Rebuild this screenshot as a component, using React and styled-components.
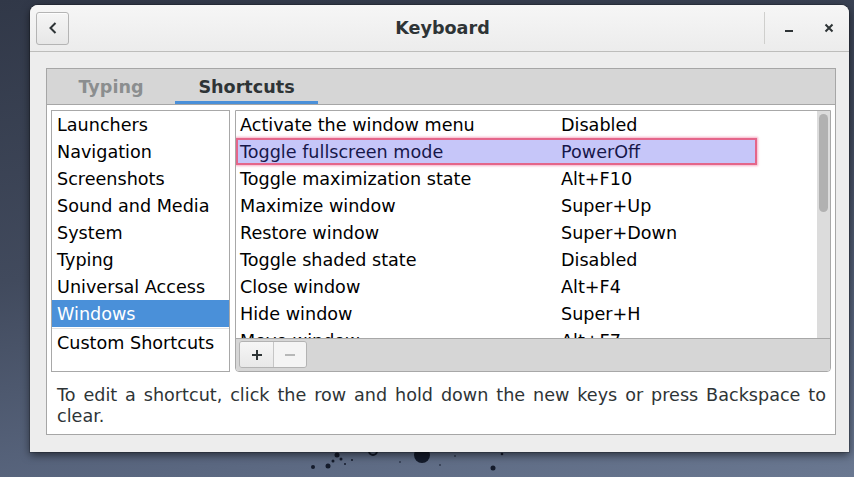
import React from 'react';
import styled, { createGlobalStyle } from 'styled-components';

const Global = createGlobalStyle`
  html, body { margin: 0; padding: 0; }
  body { font-family: "DejaVu Sans", "Noto Sans", sans-serif; }
  * { box-sizing: border-box; }
`;

const FONT = '17.6px';

const Desktop = styled.div`
  position: relative;
  width: 854px;
  height: 477px;
  overflow: hidden;
  padding: 5px 0 0 30px;
  background: linear-gradient(170deg, #313848 0%, #414a5d 45%, #5a6780 80%, #6a7891 100%);
`;

const Splatter = styled.svg`
  position: absolute;
  left: 0;
  bottom: 0;
  width: 854px;
  height: 30px;
`;

const Window = styled.div`
  position: relative;
  z-index: 1;
  width: 819px;
  height: 447px;
  display: flex;
  flex-direction: column;
  background: #ededed;
  border-radius: 8px 8px 0 0;
  box-shadow: 0 3px 9px rgba(0, 0, 0, 0.55), 0 0 0 1px rgba(0, 0, 0, 0.18);
`;

const HeaderBar = styled.div`
  height: 47px;
  flex: none;
  display: grid;
  grid-template-columns: 1fr auto 1fr;
  align-items: center;
  padding: 0 0 0 6px;
  border-bottom: 1px solid #bdbdbb;
  border-radius: 8px 8px 0 0;
  background: linear-gradient(180deg, #f6f6f6 0%, #ececec 100%);
`;

const BackButton = styled.button`
  width: 33px;
  height: 33px;
  padding: 0;
  margin: 0;
  display: flex;
  align-items: center;
  justify-content: center;
  border: 1px solid #b4b4b4;
  border-radius: 3px;
  background: linear-gradient(180deg, #f5f5f5 0%, #e7e7e7 100%);
  box-shadow: inset 0 1px rgba(255, 255, 255, 0.8);
`;

const Title = styled.div`
  font-size: ${FONT};
  font-weight: bold;
  color: #2e3436;
  padding-bottom: 1px;
`;

const Controls = styled.div`
  justify-self: end;
  display: flex;
  align-items: center;
  height: 100%;
`;

const VSep = styled.div`
  width: 1px;
  height: 32px;
  background: #cfcfcd;
  margin-right: 4px;
`;

const CtlButton = styled.div`
  width: 40px;
  height: 32px;
  display: flex;
  align-items: center;
  justify-content: center;
`;

const Body = styled.div`
  flex: 1;
  display: flex;
  padding: 16px 13px 17px 16px;
`;

const Notebook = styled.div`
  flex: 1;
  display: flex;
  flex-direction: column;
  border: 1px solid #a6a6a6;
  background: #ffffff;
`;

const TabBar = styled.div`
  height: 36px;
  flex: none;
  display: flex;
  background: #d6d6d6;
  border-bottom: 1px solid #a6a6a6;
`;

const Tab = styled.div`
  width: ${p => p.$w}px;
  display: flex;
  align-items: center;
  justify-content: center;
  font-size: ${FONT};
  font-weight: bold;
  color: ${p => (p.$active ? '#2e3436' : '#8b8e8f')};
  box-shadow: ${p => (p.$active ? 'inset 0 -3px #4a90d9' : 'none')};
`;

const Page = styled.div`
  flex: 1;
  display: flex;
  flex-direction: column;
  padding: 5px 4px 0 4px;
`;

const Panes = styled.div`
  height: 262px;
  flex: none;
  display: flex;
  gap: 5px;
`;

const SideList = styled.div`
  width: 179px;
  flex: none;
  border: 1px solid #a8a8a8;
  background: #fff;
`;

const SideItem = styled.div`
  height: 27px;
  display: flex;
  align-items: center;
  padding-left: 5px;
  font-size: ${FONT};
  white-space: nowrap;
  color: ${p => (p.$selected ? '#ffffff' : '#000000')};
  background: ${p => (p.$selected ? '#4a90d9' : 'transparent')};
`;

const SideSep = styled.div`
  height: 1px;
  margin: 1px 0 0;
  background: #e2e2e2;
`;

const MainPane = styled.div`
  flex: 1;
  display: flex;
  flex-direction: column;
  border: 1px solid #a8a8a8;
  border-radius: 0 0 4px 4px;
  overflow: hidden;
`;

const ScrollArea = styled.div`
  height: 227px;
  flex: none;
  display: flex;
  background: #fff;
  overflow: hidden;
`;

const Rows = styled.div`
  flex: 1;
  overflow: hidden;
`;

const Row = styled.div`
  width: 521px;
  height: 27px;
  display: grid;
  grid-template-columns: 321px 1fr;
  align-items: center;
  padding-left: 4px;
  font-size: ${FONT};
  white-space: nowrap;
  color: ${p => (p.$hl ? '#17174a' : '#000000')};
  background: ${p => (p.$hl ? '#c6c6f9' : 'transparent')};
  box-shadow: ${p =>
    p.$hl ? 'inset 0 0 0 2px #e4668a, 0 0 2px 1px rgba(240, 110, 150, 0.55)' : 'none'};
`;

const Trough = styled.div`
  width: 13px;
  flex: none;
  background: #dcdcdc;
  padding: 3px 2px 0 2px;
`;

const Thumb = styled.div`
  height: 98px;
  border-radius: 5px;
  background: #b1b1b1;
`;

const Toolbar = styled.div`
  flex: 1;
  display: flex;
  align-items: flex-start;
  padding: 2px 0 0 3px;
  background: #d6d6d6;
  border-top: 1px solid #a8a8a8;
`;

const ButtonGroup = styled.div`
  display: flex;
  height: 27px;
  border: 1px solid #b3b3b3;
  border-radius: 3px;
  overflow: hidden;
`;

const ToolButton = styled.div`
  width: ${p => p.$w}px;
  display: flex;
  align-items: center;
  justify-content: center;
  background: ${p =>
    p.$disabled ? '#f4f4f4' : 'linear-gradient(180deg, #f6f6f6 0%, #e8e8e8 100%)'};
  & + & {
    border-left: 1px solid #c6c6c6;
  }
`;

const Help = styled.div`
  padding: 13px 5px 7px 6px;
  font-size: ${FONT};
  line-height: 21px;
  color: #2e3436;
  text-align: justify;
  text-align-last: left;
`;

const categories = [
  'Launchers',
  'Navigation',
  'Screenshots',
  'Sound and Media',
  'System',
  'Typing',
  'Universal Access',
  'Windows',
];

const shortcuts = [
  ['Activate the window menu', 'Disabled'],
  ['Toggle fullscreen mode', 'PowerOff', true],
  ['Toggle maximization state', 'Alt+F10'],
  ['Maximize window', 'Super+Up'],
  ['Restore window', 'Super+Down'],
  ['Toggle shaded state', 'Disabled'],
  ['Close window', 'Alt+F4'],
  ['Hide window', 'Super+H'],
  ['Move window', 'Alt+F7'],
];

export default function App() {
  return (
    <Desktop>
      <Global />
      <Splatter viewBox="0 0 854 30">
        <g fill="#141b2b">
          <circle cx="422" cy="8" r="8" />
          <circle cx="373" cy="4" r="4" fill="none" stroke="#141b2b" strokeWidth="2" />
          <circle cx="337" cy="8" r="2.5" />
          <circle cx="341" cy="12" r="1.5" />
          <circle cx="333" cy="14" r="1.5" />
          <circle cx="328" cy="19" r="2.5" />
          <circle cx="345" cy="17" r="1" />
          <circle cx="313" cy="20" r="2" />
          <circle cx="493" cy="21" r="2.5" />
          <circle cx="502" cy="7" r="1.3" />
          <circle cx="352" cy="13" r="1" />
          <circle cx="440" cy="18" r="0.8" />
          <circle cx="400" cy="15" r="0.8" />
          <circle cx="455" cy="9" r="0.8" />
        </g>
      </Splatter>
      <Window>
        <HeaderBar>
          <div>
            <BackButton aria-label="Back">
              <svg width="12" height="14" viewBox="0 0 12 14">
                <path d="M8.5 2 L3.5 7 L8.5 12" fill="none" stroke="#2e3436" strokeWidth="2" />
              </svg>
            </BackButton>
          </div>
          <Title>Keyboard</Title>
          <Controls>
            <VSep />
            <CtlButton>
              <svg width="10" height="10" viewBox="0 0 10 10">
                <rect x="1" y="7" width="8" height="2" fill="#2e3436" />
              </svg>
            </CtlButton>
            <CtlButton>
              <svg width="10" height="10" viewBox="0 0 10 10">
                <path d="M1.5 1.5 L8.5 8.5 M8.5 1.5 L1.5 8.5" stroke="#2e3436" strokeWidth="2" />
              </svg>
            </CtlButton>
          </Controls>
        </HeaderBar>
        <Body>
          <Notebook>
            <TabBar>
              <Tab $w={128}>Typing</Tab>
              <Tab $w={143} $active>Shortcuts</Tab>
            </TabBar>
            <Page>
              <Panes>
                <SideList>
                  {categories.map(c => (
                    <SideItem key={c} $selected={c === 'Windows'}>{c}</SideItem>
                  ))}
                  <SideSep />
                  <SideItem>Custom Shortcuts</SideItem>
                </SideList>
                <MainPane>
                  <ScrollArea>
                    <Rows>
                      {shortcuts.map(([name, key, hl]) => (
                        <Row key={name} $hl={hl}>
                          <span>{name}</span>
                          <span>{key}</span>
                        </Row>
                      ))}
                    </Rows>
                    <Trough>
                      <Thumb />
                    </Trough>
                  </ScrollArea>
                  <Toolbar>
                    <ButtonGroup>
                      <ToolButton $w={33}>
                        <svg width="12" height="12" viewBox="0 0 12 12">
                          <path d="M6 1 V11 M1 6 H11" stroke="#2e3436" strokeWidth="2" />
                        </svg>
                      </ToolButton>
                      <ToolButton $w={33} $disabled>
                        <svg width="12" height="12" viewBox="0 0 12 12">
                          <path d="M1 6 H11" stroke="#a3a5a5" strokeWidth="1.6" />
                        </svg>
                      </ToolButton>
                    </ButtonGroup>
                  </Toolbar>
                </MainPane>
              </Panes>
              <Help>
                To edit a shortcut, click the row and hold down the new keys or press Backspace to clear.
              </Help>
            </Page>
          </Notebook>
        </Body>
      </Window>
    </Desktop>
  );
}
